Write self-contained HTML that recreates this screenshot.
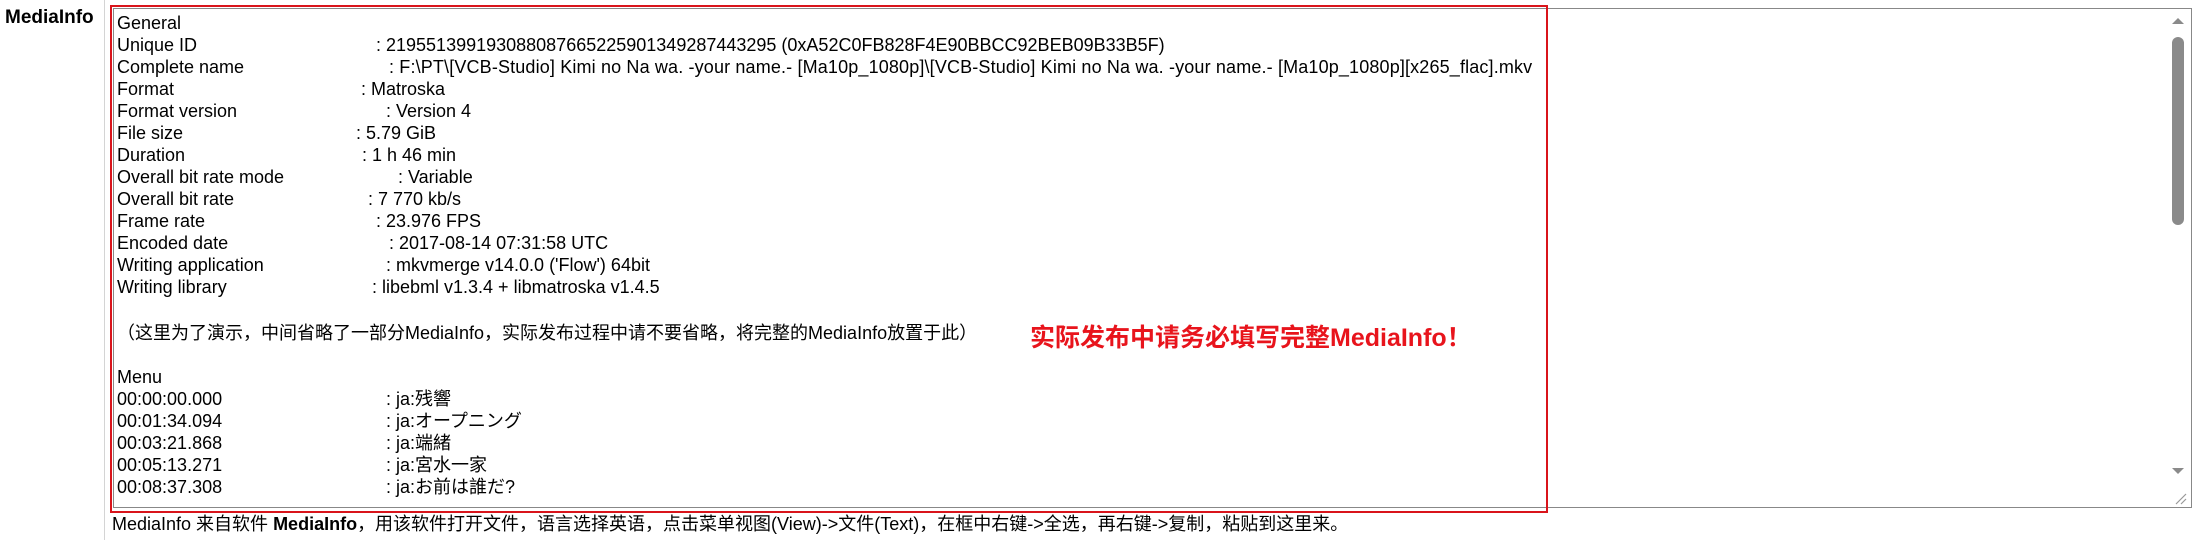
<!DOCTYPE html>
<html><head><meta charset="utf-8"><style>
*{margin:0;padding:0;box-sizing:border-box}
body{width:2194px;height:540px;background:#fff;position:relative;overflow:hidden;font-family:"Liberation Sans","Noto Sans CJK SC",sans-serif;color:#000}
.lbl{position:absolute;left:5px;top:7px;font-size:19px;font-weight:bold}
.div{position:absolute;left:104px;top:0;width:1px;height:540px;background:#d4d4d4}
.ta{position:absolute;left:113px;top:8px;width:2079px;height:500px;border:1px solid #888;background:#fff}
.red{position:absolute;left:110px;top:5px;width:1438px;height:508px;border:2px solid #d9141b}
.l{position:absolute;font-size:18px;white-space:nowrap;line-height:22px}
.sb{position:absolute;left:2172px;top:37px;width:12px;height:188px;background:#8a8a8a;border-radius:6px}
.note{position:absolute;left:1030px;top:318px;font-size:25px;color:#e8141c;white-space:nowrap;font-weight:bold}
.help{position:absolute;left:112px;top:510px;font-size:18px;white-space:nowrap}
</style></head><body>
<div class="lbl">MediaInfo</div>
<div class="div"></div>
<div class="ta"></div>
<div class="red"></div>
<div class="l" style="left:117px;top:12px">General</div>
<div class="l" style="left:117px;top:34px">Unique ID</div><div class="l" style="left:376px;top:34px">: 219551399193088087665225901349287443295 (0xA52C0FB828F4E90BBCC92BEB09B33B5F)</div>
<div class="l" style="left:117px;top:56px">Complete name</div><div class="l" style="left:389px;top:56px;letter-spacing:0.15px">: F:\PT\[VCB-Studio] Kimi no Na wa. -your name.- [Ma10p_1080p]\[VCB-Studio] Kimi no Na wa. -your name.- [Ma10p_1080p][x265_flac].mkv</div>
<div class="l" style="left:117px;top:78px">Format</div><div class="l" style="left:361px;top:78px">: Matroska</div>
<div class="l" style="left:117px;top:100px">Format version</div><div class="l" style="left:386px;top:100px">: Version 4</div>
<div class="l" style="left:117px;top:122px">File size</div><div class="l" style="left:356px;top:122px">: 5.79 GiB</div>
<div class="l" style="left:117px;top:144px">Duration</div><div class="l" style="left:362px;top:144px">: 1 h 46 min</div>
<div class="l" style="left:117px;top:166px">Overall bit rate mode</div><div class="l" style="left:398px;top:166px">: Variable</div>
<div class="l" style="left:117px;top:188px">Overall bit rate</div><div class="l" style="left:368px;top:188px">: 7 770 kb/s</div>
<div class="l" style="left:117px;top:210px">Frame rate</div><div class="l" style="left:376px;top:210px">: 23.976 FPS</div>
<div class="l" style="left:117px;top:232px">Encoded date</div><div class="l" style="left:389px;top:232px">: 2017-08-14 07:31:58 UTC</div>
<div class="l" style="left:117px;top:254px">Writing application</div><div class="l" style="left:386px;top:254px">: mkvmerge v14.0.0 ('Flow') 64bit</div>
<div class="l" style="left:117px;top:276px">Writing library</div><div class="l" style="left:372px;top:276px">: libebml v1.3.4 + libmatroska v1.4.5</div>
<div class="l" style="left:117px;top:322px">（这里为了演示，中间省略了一部分MediaInfo，实际发布过程中请不要省略，将完整的MediaInfo放置于此）</div>
<div class="note">实际发布中请务必填写完整MediaInfo！</div>
<div class="l" style="left:117px;top:366px">Menu</div>
<div class="l" style="left:117px;top:388px">00:00:00.000</div><div class="l" style="left:386px;top:388px">: ja:残響</div>
<div class="l" style="left:117px;top:410px">00:01:34.094</div><div class="l" style="left:386px;top:410px">: ja:オープニング</div>
<div class="l" style="left:117px;top:432px">00:03:21.868</div><div class="l" style="left:386px;top:432px">: ja:端緒</div>
<div class="l" style="left:117px;top:454px">00:05:13.271</div><div class="l" style="left:386px;top:454px">: ja:宮水一家</div>
<div class="l" style="left:117px;top:476px">00:08:37.308</div><div class="l" style="left:386px;top:476px">: ja:お前は誰だ?</div>
<div class="sb"></div>
<svg style="position:absolute;left:2171px;top:16px" width="14" height="10"><polygon points="7,2 13,8 1,8" fill="#8a8a8a"/></svg>
<svg style="position:absolute;left:2171px;top:466px" width="14" height="10"><polygon points="1,2 13,2 7,8" fill="#8a8a8a"/></svg>
<svg style="position:absolute;left:2172px;top:490px" width="16" height="16"><path d="M4 14L14 4M9 14L14 9" stroke="#999" stroke-width="1.2"/></svg>
<div class="help">MediaInfo 来自软件 <b>MediaInfo</b>，用该软件打开文件，语言选择英语，点击菜单视图(View)-&gt;文件(Text)，在框中右键-&gt;全选，再右键-&gt;复制，粘贴到这里来。</div>
</body></html>
